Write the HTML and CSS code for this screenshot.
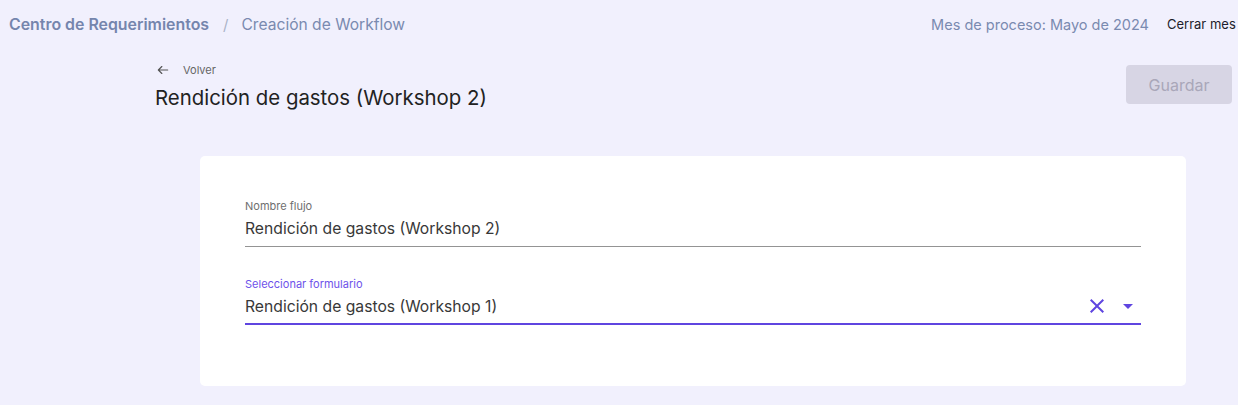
FILE: index.html
```html
<!DOCTYPE html>
<html lang="es">
<head>
<meta charset="utf-8">
<link rel="stylesheet" href="styles.css">
</head>
<body>
<header class="topbar">
  <nav class="crumbs">
    <span class="crumb-main">Centro de Requerimientos</span>
    <span class="crumb-sep">/</span>
    <span class="crumb-cur">Creación de Workflow</span>
  </nav>
  <div class="top-right">
    <span class="period">Mes de proceso: Mayo de 2024</span>
    <span class="close-month">Cerrar mes</span>
  </div>
</header>
<main class="page">
  <div class="page-head">
    <div class="title-block">
      <a class="back">
        <svg width="14" height="14" viewBox="0 0 24 24" fill="none" stroke="#555" stroke-width="2" stroke-linecap="round" stroke-linejoin="round"><path d="M20 12H4M10 6l-6 6 6 6"/></svg>
        <span>Volver</span>
      </a>
      <h1 class="title">Rendición de gastos (Workshop 2)</h1>
    </div>
    <button class="save" disabled>Guardar</button>
  </div>
  <section class="card">
    <div class="field">
      <label class="field-label">Nombre flujo</label>
      <div class="field-value">Rendición de gastos (Workshop 2)</div>
    </div>
    <div class="field field-active">
      <label class="field-label">Seleccionar formulario</label>
      <div class="field-value">
        <span>Rendición de gastos (Workshop 1)</span>
        <span class="icons">
          <svg class="clear" width="24" height="24" viewBox="0 0 24 24"><path d="M19 6.41 17.59 5 12 10.59 6.41 5 5 6.41 10.59 12 5 17.59 6.41 19 12 13.41 17.59 19 19 17.59 13.41 12z" fill="#5f45e0"/></svg>
          <svg class="caret" width="24" height="24" viewBox="0 0 24 24"><path d="M7 10l5 5 5-5z" fill="#5f45e0"/></svg>
        </span>
      </div>
    </div>
  </section>
</main>
</body>
</html>
```
FILE: styles.css
```css
* { box-sizing: border-box; }
html, body { margin: 0; padding: 0; }
body {
  background: #f1f0fd;
  font-family: Inter, "Noto Sans", "Liberation Sans", sans-serif;
  overflow: hidden;
  width: 1238px;
  height: 405px;
}
.topbar {
  height: 48px;
  display: flex;
  align-items: center;
  justify-content: space-between;
  padding-left: 9px;
  white-space: nowrap;
}
.crumbs { display: flex; align-items: center; }
.crumb-main { font-weight: 600; color: #7585ad; font-size: 15.9px; }
.crumb-sep { color: #aab3c8; margin: 0 13px 0 14px; font-size: 15px; }
.crumb-cur { color: #7a8ab0; font-size: 15.6px; }
.top-right { display: flex; align-items: center; }
.period { color: #7a8ab0; font-size: 14.5px; }
.close-month {
  color: #1d1d2b;
  font-size: 13px;
  margin-left: 18px;
  width: 71px;
}
.page { padding: 0 6px 0 155px; }
.page-head {
  display: flex;
  justify-content: space-between;
  align-items: flex-start;
  padding-top: 16px;
}
.title-block { display: flex; flex-direction: column; }
.back {
  display: flex;
  align-items: center;
  gap: 13px;
  font-size: 11px;
  color: #666;
  height: 14px;
  margin-top: -1px;
  padding-left: 1px;
}
.title {
  margin: 9px 0 0;
  font-size: 20.4px;
  font-weight: 400;
  color: #222;
  line-height: 24px;
}
.save {
  width: 106px;
  height: 39px;
  margin-top: 1px;
  border: none;
  border-radius: 4px;
  background: #d7d5e4;
  color: #a9a7b9;
  font-family: inherit;
  font-size: 16px;
}
.card {
  background: #fff;
  border-radius: 5px;
  margin: 46px 45px 0 45px;
  width: 986px;
  padding: 43px 45px 61px;
}
.field { border-bottom: 1px solid #949494; padding-bottom: 6px; }
.field + .field { margin-top: 30px; }
.field-label { display: block; font-size: 11px; color: #6f6f6f; line-height: 14px; }
.field-value {
  display: flex;
  align-items: center;
  justify-content: space-between;
  font-size: 15.7px;
  color: #383838;
  height: 24px;
  margin-top: 3px;
}
.field-active { border-bottom: 2px solid #5f45e0; padding-bottom: 5px; }
.field-active .field-label { color: #6e52ea; }
.icons { display: flex; align-items: center; gap: 7px; margin-right: 1px; }
```
